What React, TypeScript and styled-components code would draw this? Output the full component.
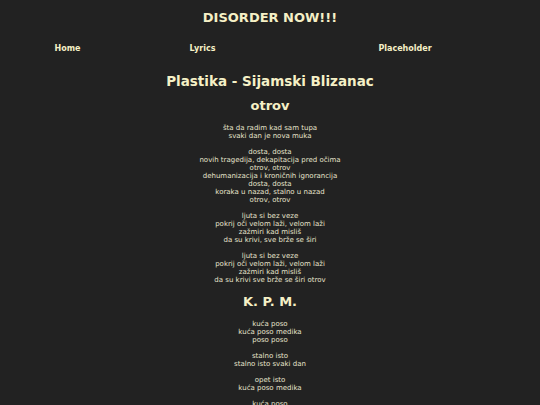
import React from 'react'
import styled, { createGlobalStyle } from 'styled-components'

const GlobalStyle = createGlobalStyle`
  html, body {
    margin: 0;
    padding: 0;
    background-color: #222222;
  }
  body {
    font-family: "DejaVu Sans", Verdana, sans-serif;
    color: #e6e2cc;
  }
`

type Song = {
  name: string
  stanzas: string[][]
}

const songs: Song[] = [
  {
    name: 'otrov',
    stanzas: [
      ['šta da radim kad sam tupa', 'svaki dan je nova muka'],
      [
        'dosta, dosta',
        'novih tragedija, dekapitacija pred očima',
        'otrov, otrov',
        'dehumanizacija i kroničnih ignorancija',
        'dosta, dosta',
        'koraka u nazad, stalno u nazad',
        'otrov, otrov',
      ],
      ['ljuta si bez veze', 'pokrij oči velom laži, velom laži', 'zažmiri kad misliš', 'da su krivi, sve brže se širi'],
      ['ljuta si bez veze', 'pokrij oči velom laži, velom laži', 'zažmiri kad misliš', 'da su krivi sve brže se širi otrov'],
    ],
  },
  {
    name: 'K. P. M.',
    stanzas: [
      ['kuća poso', 'kuća poso medika', 'poso poso'],
      ['stalno isto', 'stalno isto svaki dan'],
      ['opet isto', 'kuća poso medika'],
      ['kuća poso', 'kuća poso medika'],
    ],
  },
]

const Page = styled.div`
  display: flex;
  flex-direction: column;
  align-items: stretch;
  text-align: center;
`

const SiteTitle = styled.h1`
  margin: 10px 0 0;
  font-size: 13px;
  line-height: 15px;
  font-weight: bold;
  color: #f5f0c6;
`

const Nav = styled.nav`
  display: grid;
  grid-template-columns: 1fr 1fr 2fr;
  margin-top: 18.5px;
`

const NavLink = styled.a`
  font-size: 8px;
  line-height: 10px;
  font-weight: bold;
  color: #f5f0c6;
  text-decoration: none;
  cursor: pointer;
`

const Main = styled.main`
  display: block;
  margin-top: 19px;
`

const AlbumTitle = styled.h2`
  margin: 0;
  font-size: 13.5px;
  line-height: 16px;
  font-weight: bold;
  color: #f5f0c6;
`

const SongTitle = styled.h3`
  margin: 9.5px 0 11px;
  font-size: 13px;
  line-height: 15px;
  font-weight: bold;
  color: #f5f0c6;
`

const Stanza = styled.p`
  margin: 8px 0;
  font-size: 7px;
  line-height: 8px;
`

const App = () => {
  return (
    <>
      <GlobalStyle />
      <Page>
        <SiteTitle>DISORDER NOW!!!</SiteTitle>
        <Nav>
          <NavLink>Home</NavLink>
          <NavLink>Lyrics</NavLink>
          <NavLink>Placeholder</NavLink>
        </Nav>
        <Main>
          <AlbumTitle>Plastika - Sijamski Blizanac</AlbumTitle>
          {songs.map((song) => (
            <section key={song.name}>
              <SongTitle>{song.name}</SongTitle>
              {song.stanzas.map((lines, i) => (
                <Stanza key={i}>
                  {lines.map((line, j) => (
                    <React.Fragment key={j}>
                      {line}
                      {j < lines.length - 1 && <br />}
                    </React.Fragment>
                  ))}
                </Stanza>
              ))}
            </section>
          ))}
        </Main>
      </Page>
    </>
  )
}

export default App
